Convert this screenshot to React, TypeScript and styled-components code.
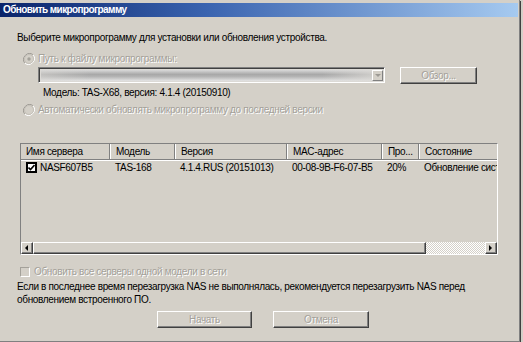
import React from "react";
import styled, { createGlobalStyle } from "styled-components";

const Global = createGlobalStyle`
  html, body {
    margin: 0;
    padding: 0;
    background: #d4d0c8;
  }
  body {
    font-family: "Liberation Sans", "DejaVu Sans", sans-serif;
    font-size: 10px;
    letter-spacing: -0.33px;
    color: #000;
  }
`;

const columns = [
  { title: "Имя сервера", width: 89 },
  { title: "Модель", width: 65 },
  { title: "Версия", width: 112 },
  { title: "MAC-адрес", width: 95 },
  { title: "Про...", width: 37 },
  { title: "Состояние", width: 80 },
];

const row = ["NASF607B5", "TAS-168", "4.1.4.RUS (20151013)", "00-08-9B-F6-07-B5", "20%", "Обновление сист"];

function Radio({ checked }: { checked?: boolean }) {
  return (
    <svg width="12" height="12" viewBox="0 0 12 12">
      <path d="M10.2 1.8 A6 6 0 0 0 1.8 10.2" fill="none" stroke="#9d9a94" />
      <path d="M1.8 10.2 A6 6 0 0 0 10.2 1.8" fill="none" stroke="#ffffff" />
      <circle cx="6" cy="6" r="4.5" fill="#d4d0c8" stroke="#c4c0b8" />
      {checked && <circle cx="6" cy="6" r="1.7" fill="#a4a19a" />}
    </svg>
  );
}

function Arrow({ dir }: { dir: "left" | "right" | "down" }) {
  const d =
    dir === "left" ? "M5 1 L2 4 L5 7 Z" : dir === "right" ? "M2 1 L5 4 L2 7 Z" : "M1 2 L7 2 L4 5 Z";
  return (
    <svg width="8" height="8" viewBox="0 0 8 8">
      <path d={d} fill={dir === "down" ? "#9d9a94" : "#000"} />
    </svg>
  );
}

export default function App() {
  return (
    <Window>
      <Global />
      <TitleBar>Обновить микропрограмму</TitleBar>
      <Content>
        <Intro>Выберите микропрограмму для установки или обновления устройства.</Intro>
        <OptionRow $top={8}>
          <Radio checked />
          <Disabled>Путь к файлу микропрограммы:</Disabled>
        </OptionRow>
        <PathRow>
          <Combo>
            <ComboValue />
            <ComboButton>
              <Arrow dir="down" />
            </ComboButton>
          </Combo>
          <Button $width={77}>Обзор...</Button>
        </PathRow>
        <ModelInfo>Модель: TAS-X68, версия: 4.1.4 (20150910)</ModelInfo>
        <OptionRow $top={4}>
          <Radio />
          <Disabled>Автоматически обновлять микропрограмму до последней версии</Disabled>
        </OptionRow>
        <ListView>
          <Header>
            {columns.map((c) => (
              <HeaderCell key={c.title} $width={c.width}>
                {c.title}
              </HeaderCell>
            ))}
          </Header>
          <Rows>
            <Row>
              {row.map((v, i) => (
                <Cell key={i} $width={columns[i].width}>
                  {i === 0 && (
                    <ListCheck>
                      <svg width="7" height="7" viewBox="0 0 7 7">
                        <path d="M0.5 3.5 L2.5 5.5 L6.5 1" fill="none" stroke="#000" strokeWidth="1.6" />
                      </svg>
                    </ListCheck>
                  )}
                  {v}
                </Cell>
              ))}
            </Row>
          </Rows>
          <HScroll>
            <ScrollButton>
              <Arrow dir="left" />
            </ScrollButton>
            <Thumb />
            <Track />
            <ScrollButton>
              <Arrow dir="right" />
            </ScrollButton>
          </HScroll>
        </ListView>
        <CheckRow>
          <Box />
          <Disabled>Обновить все серверы одной модели в сети</Disabled>
        </CheckRow>
        <Note>
          Если в последнее время перезагрузка NAS не выполнялась, рекомендуется перезагрузить NAS перед
          <br />
          обновлением встроенного ПО.
        </Note>
        <Buttons>
          <Button $width={95}>Начать</Button>
          <Button $width={96}>Отмена</Button>
        </Buttons>
      </Content>
    </Window>
  );
}

const Window = styled.div`
  width: 519px;
  height: 338px;
  padding-top: 3px;
  border-right: 1px solid #808080;
  border-bottom: 1px solid #808080;
  box-shadow: 1px 1px 0 #404040;
  display: flex;
  flex-direction: column;
`;

const TitleBar = styled.div`
  height: 14px;
  margin-right: 1px;
  padding-left: 3px;
  background: linear-gradient(to right, #0a246a, #3a64b0 40%, #a6caf0);
  color: #fff;
  font-weight: bold;
  font-size: 10px;
  letter-spacing: -0.6px;
  line-height: 14px;
  white-space: nowrap;
`;

const Content = styled.div`
  display: flex;
  flex-direction: column;
  padding-left: 17px;
  line-height: 13px;
`;

const Intro = styled.div`
  margin-top: 14px;
  white-space: nowrap;
`;

const Disabled = styled.span`
  color: #a4a19a;
  text-shadow: 1px 1px 0 #fff;
  white-space: nowrap;
`;

const OptionRow = styled.div<{ $top: number }>`
  display: flex;
  align-items: center;
  gap: 3px;
  margin-top: ${(p) => p.$top}px;
  margin-left: 6px;
  height: 13px;
`;

const PathRow = styled.div`
  display: flex;
  gap: 15px;
  margin-top: 2px;
  margin-left: 21px;
`;

const Combo = styled.div`
  width: 347px;
  height: 16px;
  box-sizing: border-box;
  border-top: 1px solid #808080;
  border-left: 1px solid #808080;
  border-right: 1px solid #fff;
  border-bottom: 1px solid #fff;
  box-shadow: inset 1px 1px 0 #404040;
  display: flex;
  padding: 2px 1px 1px 2px;
  background: #dcdad6;
`;

const ComboValue = styled.div`
  flex: 1;
  background: linear-gradient(
      to right,
      rgba(220, 218, 214, 0.5),
      rgba(220, 218, 214, 0) 15%,
      rgba(220, 218, 214, 0) 85%,
      rgba(220, 218, 214, 0.7)
    ),
    linear-gradient(to bottom, #d8d8d8 0%, #a8a8a8 40%, #b4b4b4 60%, #e4e4e4 100%);
`;

const ComboButton = styled.div`
  width: 11px;
  box-sizing: border-box;
  border: 1px solid;
  border-color: #fff #808080 #808080 #fff;
  background: #d4d0c8;
  display: flex;
  align-items: center;
  justify-content: center;
`;

const Button = styled.div<{ $width: number }>`
  width: ${(p) => p.$width}px;
  height: 17px;
  box-sizing: border-box;
  border: 1px solid;
  border-color: #fff #404040 #404040 #fff;
  box-shadow: inset -1px -1px 0 #808080;
  display: flex;
  align-items: center;
  justify-content: center;
  color: #a4a19a;
  text-shadow: 1px 1px 0 #fff;
`;

const ModelInfo = styled.div`
  margin-top: 2px;
  margin-left: 26px;
  white-space: nowrap;
`;

const ListView = styled.div`
  margin-top: 27px;
  margin-left: 3px;
  width: 478px;
  height: 112px;
  box-sizing: border-box;
  border: 1px solid;
  border-color: #808080 #fff #fff #808080;
  display: flex;
  flex-direction: column;
  overflow: hidden;
`;

const Header = styled.div`
  display: flex;
  height: 15px;
  flex: none;
  border-bottom: 1px solid #808080;
  box-shadow: 0 1px 0 #fff;
`;

const HeaderCell = styled.div<{ $width: number }>`
  width: ${(p) => p.$width}px;
  flex: none;
  box-sizing: border-box;
  padding-left: 5px;
  line-height: 15px;
  border-left: 1px solid #fff;
  border-right: 1px solid #808080;
  white-space: nowrap;
  overflow: hidden;
  &:first-child {
    border-left: none;
  }
  &:last-child {
    flex: 1;
    border-right: none;
  }
`;

const Rows = styled.div`
  flex: 1;
  padding-top: 1px;
`;

const Row = styled.div`
  display: flex;
  height: 13px;
`;

const Cell = styled.div<{ $width: number }>`
  width: ${(p) => p.$width}px;
  flex: none;
  box-sizing: border-box;
  padding-left: 5px;
  display: flex;
  align-items: center;
  white-space: nowrap;
  overflow: hidden;
  &:last-child {
    flex: 1;
  }
`;

const ListCheck = styled.span`
  width: 11px;
  height: 11px;
  box-sizing: border-box;
  border: 2px solid #000;
  background: #fff;
  margin-right: 3px;
  display: inline-flex;
  align-items: center;
  justify-content: center;
  flex: none;
`;

const HScroll = styled.div`
  display: flex;
  height: 12px;
  flex: none;
`;

const ScrollButton = styled.div`
  width: 12px;
  height: 12px;
  box-sizing: border-box;
  border: 1px solid;
  border-color: #fff #404040 #404040 #fff;
  box-shadow: inset -1px -1px 0 #808080;
  background: #d4d0c8;
  display: flex;
  align-items: center;
  justify-content: center;
`;

const Thumb = styled.div`
  width: 393px;
  box-sizing: border-box;
  border: 1px solid;
  border-color: #fff #404040 #404040 #fff;
  box-shadow: inset -1px -1px 0 #808080;
  background: #d4d0c8;
`;

const Track = styled.div`
  flex: 1;
  background-color: #e8e6e2;
  background-image: repeating-conic-gradient(#ffffff 0 25%, #d4d0c8 0 50%);
  background-size: 2px 2px;
`;

const CheckRow = styled.div`
  display: flex;
  align-items: center;
  gap: 4px;
  margin-top: 10px;
  margin-left: 3px;
  height: 13px;
`;

const Box = styled.div`
  width: 10px;
  height: 10px;
  box-sizing: border-box;
  border: 1px solid;
  border-color: #a4a19a #fff #fff #a4a19a;
  background: #d4d0c8;
`;

const Note = styled.div`
  margin-top: 2px;
  white-space: nowrap;
`;

const Buttons = styled.div`
  display: flex;
  gap: 21px;
  margin-top: 5px;
  margin-left: 140px;
`;
